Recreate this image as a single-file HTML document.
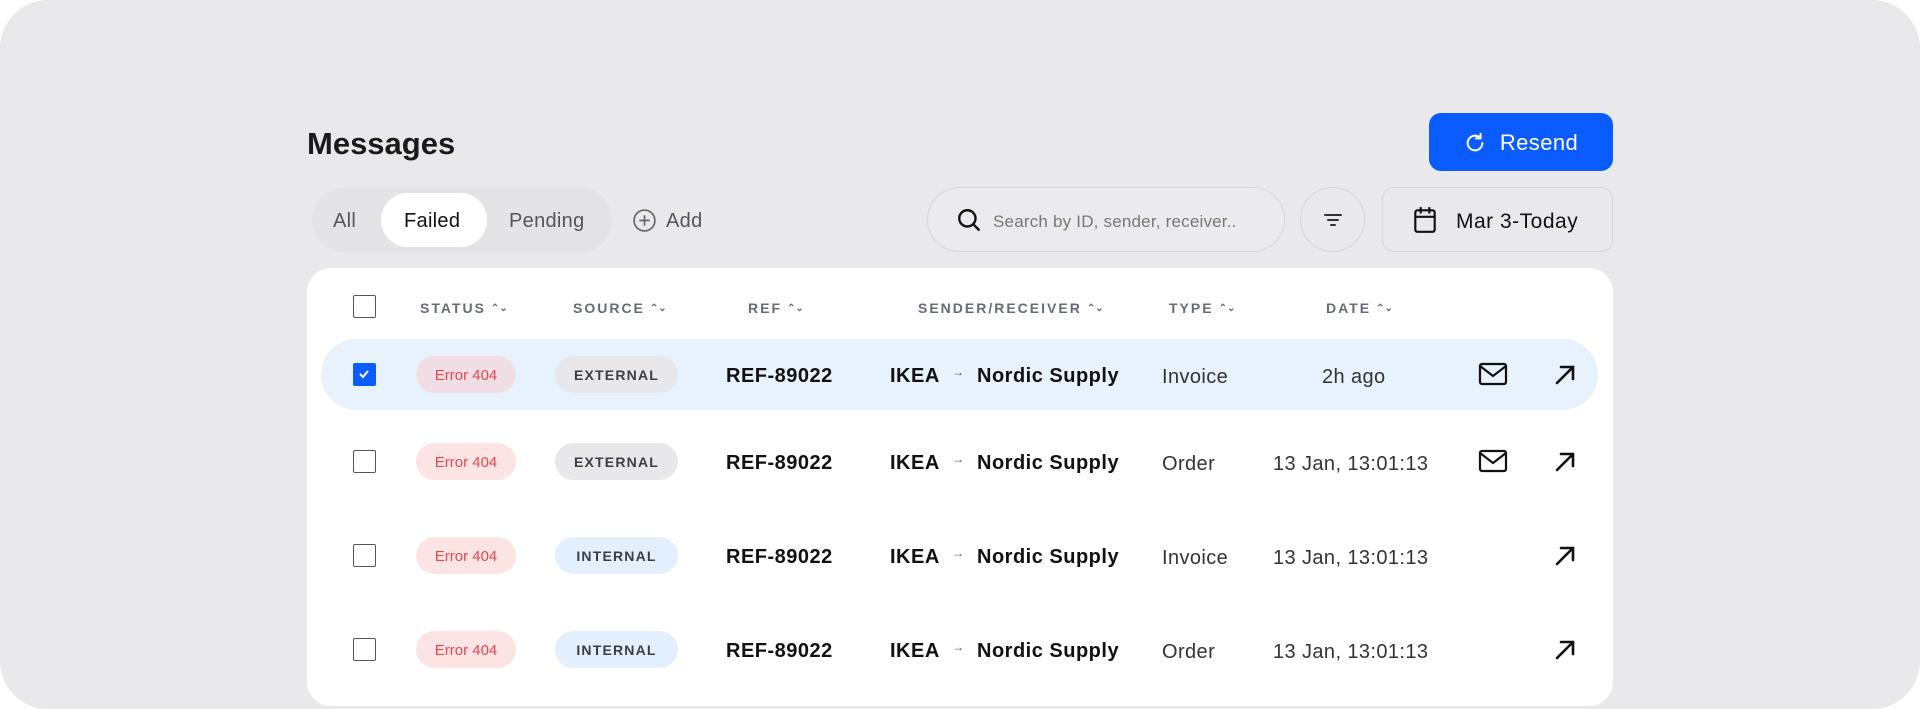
<!DOCTYPE html>
<html><head><style>
*{box-sizing:border-box;margin:0;padding:0}
body{width:1920px;height:709px;background:#fff;font-family:"Liberation Sans",sans-serif;overflow:hidden;position:relative}
.bg{position:absolute;left:0;top:0;width:1920px;height:709px;background:#e9e9eb;border-radius:48px;overflow:hidden}
.abs{position:absolute}
.title{left:307px;top:126px;font-size:31px;font-weight:bold;color:#1a1a1a;letter-spacing:0px}
.resend{left:1429px;top:113px;width:184px;height:58px;background:#0a5cff;border-radius:12px;color:#fff;font-size:22px;letter-spacing:0.4px;display:flex;align-items:center;justify-content:center;gap:14px;padding-top:2px}
.tabs{left:312px;top:187px;width:300px;height:66px;background:#e4e4e6;border-radius:33px}
.failed{left:381px;top:193px;width:106px;height:54px;background:#fff;border-radius:27px}
.tab{top:210px;font-size:20px;color:#555;letter-spacing:0.3px}
.search{left:927px;top:187px;width:358px;height:65px;border:1.5px solid #d6d6d8;border-radius:33px;background:#ebebed}
.stext{left:993px;top:212px;font-size:17px;color:#777;letter-spacing:0.2px}
.filter{left:1300px;top:187px;width:65px;height:65px;border:1.5px solid #d6d6d8;border-radius:50%}
.date{left:1382px;top:187px;width:231px;height:65px;border:1.5px solid #d6d6d8;border-radius:12px}
.card{left:307px;top:268px;width:1306px;height:438px;background:#fff;border-radius:24px}
.hd{top:300px;font-size:14px;font-weight:bold;letter-spacing:2px;color:#666b75}
.hd span{font-size:10px;letter-spacing:0;margin-left:5px;vertical-align:2px}
.cb{left:353px;width:23px;height:23px;border:1.5px solid #555;border-radius:2px;background:#fff}
.hl{left:321px;top:339px;width:1277px;height:71px;background:#e8f2fd;border-radius:36px}
.err{left:416px;width:100px;height:37px;border-radius:19px;background:#fde4e4;color:#e5484d;font-size:15px;display:flex;align-items:center;justify-content:center;padding-top:2px}
.src{left:555px;width:123px;height:37px;border-radius:19px;font-size:14px;font-weight:bold;letter-spacing:1.2px;color:#3d3d45;display:flex;align-items:center;justify-content:center}
.ext{background:#e8e8ea}.int{background:#e3effd}
.b{font-size:20px;font-weight:bold;color:#111;letter-spacing:0.5px}
.arr{font-size:12px;color:#555}
.ty{font-size:20px;color:#333;letter-spacing:0.4px}
</style></head><body>
<div class="bg">
<div class="abs title">Messages</div>
<div class="abs resend"><svg width="22" height="22" viewBox="0 0 24 24" fill="none" stroke="#fff" stroke-width="2.2" stroke-linecap="round"><path d="M20 12a8 8 0 1 1-3-6.2"/><path d="M18 2v5h-5"/></svg>Resend</div>
<div class="abs tabs"></div>
<div class="abs failed"></div>
<div class="abs tab" style="left:333px">All</div>
<div class="abs tab" style="left:404px;color:#111">Failed</div>
<div class="abs tab" style="left:509px">Pending</div>
<svg class="abs" style="left:632px;top:208px" width="25" height="25" viewBox="0 0 24 24" fill="none" stroke="#666" stroke-width="1.6"><circle cx="12" cy="12" r="10"/><path d="M12 7v10M7 12h10"/></svg>
<div class="abs tab" style="left:666px">Add</div>
<div class="abs search"></div>
<svg class="abs" style="left:956px;top:207px" width="26" height="26" viewBox="0 0 24 24" fill="none" stroke="#111" stroke-width="2.2" stroke-linecap="round"><circle cx="10.5" cy="10.5" r="7.5"/><path d="M16 16l5 5"/></svg>
<div class="abs stext">Search by ID, sender, receiver..</div>
<div class="abs filter"></div>
<svg class="abs" style="left:1322px;top:209px" width="22" height="22" viewBox="0 0 22 22" fill="none" stroke="#333" stroke-width="2" stroke-linecap="round"><path d="M3 6h16M6 11h10M9 16h4"/></svg>
<div class="abs date"></div>
<svg class="abs" style="left:1412px;top:206px" width="26" height="28" viewBox="0 0 24 26" fill="none" stroke="#111" stroke-width="2"><rect x="3" y="4" width="18" height="20" rx="2"/><path d="M3 10h18M8 1v6M16 1v6"/></svg>
<div class="abs" style="left:1456px;top:210px;font-size:21px;color:#111;letter-spacing:0.5px">Mar 3-Today</div>
<div class="abs card"></div>
<div class="abs cb" style="top:295px"></div>
<div class="abs hd" style="left:420px">STATUS<span>⌃⌄</span></div>
<div class="abs hd" style="left:573px">SOURCE<span>⌃⌄</span></div>
<div class="abs hd" style="left:748px">REF<span>⌃⌄</span></div>
<div class="abs hd" style="left:918px">SENDER/RECEIVER<span>⌃⌄</span></div>
<div class="abs hd" style="left:1169px">TYPE<span>⌃⌄</span></div>
<div class="abs hd" style="left:1326px">DATE<span>⌃⌄</span></div>
<div class="abs hl"></div>

<div class="abs cb" style="top:363px;background:#0a5cff;border-color:#0a5cff"><svg width="20" height="20" viewBox="0 0 20 20" fill="none" stroke="#fff" stroke-width="2"><path d="M6 10l3 3 5-6"/></svg></div>
<div class="abs err" style="top:356px;background:#f1dde4">Error 404</div>
<div class="abs src ext" style="top:356px">EXTERNAL</div>
<div class="abs b" style="left:726px;top:365px">REF-89022</div>
<div class="abs b" style="left:890px;top:365px">IKEA</div><div class="abs arr" style="left:952px;top:365px">→</div>
<div class="abs b" style="left:977px;top:365px">Nordic Supply</div>
<div class="abs ty" style="left:1162px;top:366px">Invoice</div>
<div class="abs ty" style="left:1322px;top:366px">2h ago</div>
<svg class="abs" style="left:1478px;top:362px" width="30" height="24" viewBox="0 0 30 24" fill="none" stroke="#111" stroke-width="2.2"><rect x="2" y="2" width="26" height="20" rx="2"/><path d="M2 4l13 10 13-10"/></svg>
<svg class="abs" style="left:1553px;top:363px" width="24" height="24" viewBox="0 0 24 24" fill="none" stroke="#111" stroke-width="2.6" stroke-linecap="round"><path d="M4 20L20 4M8 4h12v12"/></svg>

<div class="abs cb" style="top:450px"></div>
<div class="abs err" style="top:443px">Error 404</div>
<div class="abs src ext" style="top:443px">EXTERNAL</div>
<div class="abs b" style="left:726px;top:452px">REF-89022</div>
<div class="abs b" style="left:890px;top:452px">IKEA</div><div class="abs arr" style="left:952px;top:452px">→</div>
<div class="abs b" style="left:977px;top:452px">Nordic Supply</div>
<div class="abs ty" style="left:1162px;top:453px">Order</div>
<div class="abs ty" style="left:1273px;top:453px">13 Jan, 13:01:13</div>
<svg class="abs" style="left:1478px;top:449px" width="30" height="24" viewBox="0 0 30 24" fill="none" stroke="#111" stroke-width="2.2"><rect x="2" y="2" width="26" height="20" rx="2"/><path d="M2 4l13 10 13-10"/></svg>
<svg class="abs" style="left:1553px;top:450px" width="24" height="24" viewBox="0 0 24 24" fill="none" stroke="#111" stroke-width="2.6" stroke-linecap="round"><path d="M4 20L20 4M8 4h12v12"/></svg>

<div class="abs cb" style="top:544px"></div>
<div class="abs err" style="top:537px">Error 404</div>
<div class="abs src int" style="top:537px">INTERNAL</div>
<div class="abs b" style="left:726px;top:546px">REF-89022</div>
<div class="abs b" style="left:890px;top:546px">IKEA</div><div class="abs arr" style="left:952px;top:546px">→</div>
<div class="abs b" style="left:977px;top:546px">Nordic Supply</div>
<div class="abs ty" style="left:1162px;top:547px">Invoice</div>
<div class="abs ty" style="left:1273px;top:547px">13 Jan, 13:01:13</div>
<svg class="abs" style="left:1553px;top:544px" width="24" height="24" viewBox="0 0 24 24" fill="none" stroke="#111" stroke-width="2.6" stroke-linecap="round"><path d="M4 20L20 4M8 4h12v12"/></svg>

<div class="abs cb" style="top:638px"></div>
<div class="abs err" style="top:631px">Error 404</div>
<div class="abs src int" style="top:631px">INTERNAL</div>
<div class="abs b" style="left:726px;top:640px">REF-89022</div>
<div class="abs b" style="left:890px;top:640px">IKEA</div><div class="abs arr" style="left:952px;top:640px">→</div>
<div class="abs b" style="left:977px;top:640px">Nordic Supply</div>
<div class="abs ty" style="left:1162px;top:641px">Order</div>
<div class="abs ty" style="left:1273px;top:641px">13 Jan, 13:01:13</div>
<svg class="abs" style="left:1553px;top:638px" width="24" height="24" viewBox="0 0 24 24" fill="none" stroke="#111" stroke-width="2.6" stroke-linecap="round"><path d="M4 20L20 4M8 4h12v12"/></svg>
</div>
</body></html>
